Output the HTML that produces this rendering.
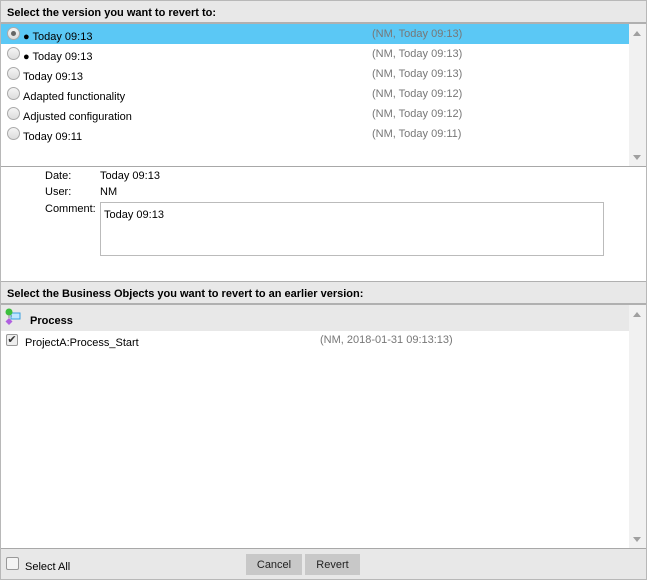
<!DOCTYPE html>
<html><head><style>
*{box-sizing:border-box;margin:0;padding:0}
body{width:647px;height:580px;font-family:"Liberation Sans",Arial,sans-serif;font-size:11px;color:#000;background:#fff;position:relative;overflow:hidden}
.abs{position:absolute}
.frame{left:0;top:0;width:647px;height:580px;border:1px solid #b8b8b8}
.hdr{left:1px;width:645px;height:23px;background:#e8e8e8;font-weight:bold;padding:6px 0 0 6px;border-bottom:2px solid #b0b0b0}
.row{left:1px;width:628px;height:20px}
.row .t{position:absolute;left:22px;top:7px}
.row .m{position:absolute;left:371px;top:4px;color:#777}
.radio{position:absolute;left:6px;top:3px;width:13px;height:13px;border-radius:50%;border:1px solid #aaa;background:linear-gradient(#f4f4f4,#ddd)}
.sb{background:#f1f1f1;width:17px}
.arr{position:absolute;left:4px;width:0;height:0;border-left:4px solid transparent;border-right:4px solid transparent}
.btn{top:554px;height:21px;background:#c8c8c8;text-align:center;padding-top:5px;color:#222}
</style></head><body>
<div class="abs frame"></div>
<div class="abs hdr" style="top:1px">Select the version you want to revert to:</div>
<div class="abs row" style="top:24px;background:#5bc8f5"><div class="radio"><div style="position:absolute;left:3px;top:3px;width:5px;height:5px;border-radius:50%;background:#666"></div></div><span class="t">● Today 09:13</span><span class="m">(NM, Today 09:13)</span></div>
<div class="abs row" style="top:44px"><div class="radio"></div><span class="t">● Today 09:13</span><span class="m">(NM, Today 09:13)</span></div>
<div class="abs row" style="top:64px"><div class="radio"></div><span class="t">Today 09:13</span><span class="m">(NM, Today 09:13)</span></div>
<div class="abs row" style="top:84px"><div class="radio"></div><span class="t">Adapted functionality</span><span class="m">(NM, Today 09:12)</span></div>
<div class="abs row" style="top:104px"><div class="radio"></div><span class="t">Adjusted configuration</span><span class="m">(NM, Today 09:12)</span></div>
<div class="abs row" style="top:124px"><div class="radio"></div><span class="t">Today 09:11</span><span class="m">(NM, Today 09:11)</span></div>
<div class="abs sb" style="left:629px;top:24px;height:142px"><div class="arr" style="top:7px;border-bottom:5px solid #a0a0a0"></div><div class="arr" style="top:131px;border-top:5px solid #a0a0a0"></div></div>
<div class="abs" style="left:1px;top:166px;width:645px;height:1px;background:#a8a8a8"></div>
<div class="abs" style="left:45px;top:170px">Date:</div><div class="abs" style="left:100px;top:170px">Today 09:13</div>
<div class="abs" style="left:45px;top:186px">User:</div><div class="abs" style="left:100px;top:186px">NM</div>
<div class="abs" style="left:45px;top:203px">Comment:</div>
<div class="abs" style="left:100px;top:202px;width:504px;height:54px;border:1px solid #bbb;padding:6px 3px">Today 09:13</div>
<div class="abs hdr" style="top:281px;border-top:1px solid #b0b0b0;height:24px">Select the Business Objects you want to revert to an earlier version:</div>
<div class="abs" style="left:1px;top:305px;width:628px;height:26px;background:#e8e8e8;font-weight:bold;padding:10px 0 0 29px">Process</div>
<svg class="abs" style="left:4px;top:308px" width="20" height="18"><rect x="7" y="5" width="9" height="6" fill="#bfe6ff" stroke="#3aa0e0"/><circle cx="5" cy="4" r="3.5" fill="#3cbf3c"/><path d="M5 10 L8.5 13.5 L5 17 L1.5 13.5Z" fill="#b060e0"/><path d="M5 7V10M8 8H7" stroke="#888"/></svg>
<div class="abs" style="left:6px;top:334px;width:12px;height:12px;border:1px solid #999;border-radius:2px;background:#eee;font-size:11px;line-height:10px;text-align:center;color:#333">✔</div>
<div class="abs" style="left:25px;top:337px">ProjectA:Process_Start</div>
<div class="abs" style="left:320px;top:334px;color:#777">(NM, 2018-01-31 09:13:13)</div>
<div class="abs sb" style="left:629px;top:305px;height:243px"><div class="arr" style="top:7px;border-bottom:5px solid #a0a0a0"></div><div class="arr" style="top:232px;border-top:5px solid #a0a0a0"></div></div>
<div class="abs" style="left:1px;top:548px;width:645px;height:31px;background:#e8e8e8;border-top:1px solid #a8a8a8"></div>
<div class="abs" style="left:6px;top:557px;width:13px;height:13px;border:1px solid #999;border-radius:2px;background:#f4f4f4"></div>
<div class="abs" style="left:25px;top:561px">Select All</div>
<div class="abs btn" style="left:246px;width:56px">Cancel</div>
<div class="abs btn" style="left:305px;width:55px">Revert</div>
</body></html>
